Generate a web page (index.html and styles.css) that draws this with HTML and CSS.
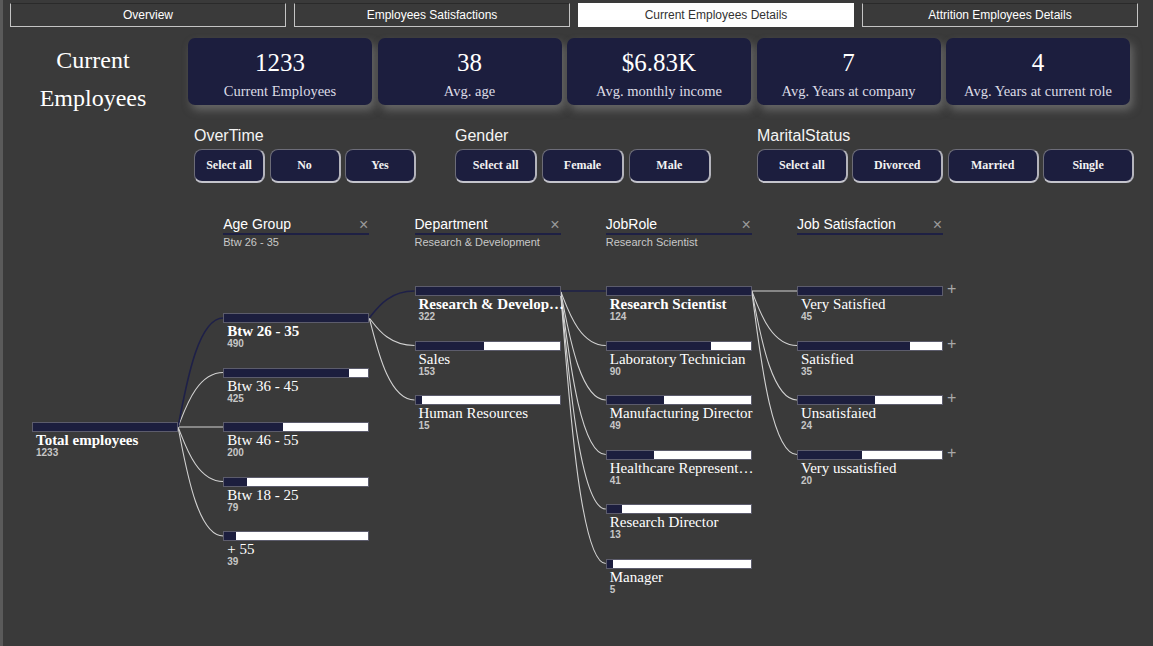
FILE: index.html
```html
<!DOCTYPE html>
<html>
<head>
<meta charset="utf-8">
<link rel="stylesheet" href="styles.css">
</head>
<body>
<div class="tabs">
  <div class="tab">Overview</div>
  <div class="tab">Employees Satisfactions</div>
  <div class="tab active">Current Employees Details</div>
  <div class="tab">Attrition Employees Details</div>
</div>

<div class="top">
  <div class="page-title">Current<br>Employees</div>
  <div class="kpis">
    <div class="kpi"><div class="kpi-value">1233</div><div class="kpi-label">Current Employees</div></div>
    <div class="kpi"><div class="kpi-value">38</div><div class="kpi-label">Avg. age</div></div>
    <div class="kpi"><div class="kpi-value">$6.83K</div><div class="kpi-label">Avg. monthly income</div></div>
    <div class="kpi"><div class="kpi-value">7</div><div class="kpi-label">Avg. Years at company</div></div>
    <div class="kpi"><div class="kpi-value">4</div><div class="kpi-label">Avg. Years at current role</div></div>
  </div>
</div>

<div class="slicers">
  <div class="slicer slicer-ot">
    <div class="slicer-title">OverTime</div>
    <div class="btns"><div class="btn">Select all</div><div class="btn">No</div><div class="btn">Yes</div></div>
  </div>
  <div class="slicer slicer-g">
    <div class="slicer-title">Gender</div>
    <div class="btns"><div class="btn">Select all</div><div class="btn">Female</div><div class="btn">Male</div></div>
  </div>
  <div class="slicer slicer-m">
    <div class="slicer-title">MaritalStatus</div>
    <div class="btns"><div class="btn">Select all</div><div class="btn">Divorced</div><div class="btn">Married</div><div class="btn">Single</div></div>
  </div>
</div>

<div class="tree-head">
  <div></div>
  <div class="th"><div class="th-title"><span>Age Group</span><span class="th-x">×</span></div><div class="th-sub">Btw 26 - 35</div></div>
  <div class="th"><div class="th-title"><span>Department</span><span class="th-x">×</span></div><div class="th-sub">Research &amp; Development</div></div>
  <div class="th"><div class="th-title"><span>JobRole</span><span class="th-x">×</span></div><div class="th-sub">Research Scientist</div></div>
  <div class="th"><div class="th-title"><span>Job Satisfaction</span><span class="th-x">×</span></div><div class="th-sub"></div></div>
</div>

<div class="tree-body">
  <svg class="links" width="1153" height="360" viewBox="0 0 1153 360">
    <g class="lk">
      <path d="M178 141 C184.8 124.65 196.1 86.5 223.25 86.5"/>
      <path d="M178 141 L223.25 141"/>
      <path d="M178 141 C184.8 157.35 196.1 195.5 223.25 195.5"/>
      <path d="M178 141 C184.8 173.7 196.1 250 223.25 250"/>
      <path d="M369.25 32 C376.05 40.25 387.35 59.5 414.5 59.5"/>
      <path d="M369.25 32 C376.05 56.6 387.35 114 414.5 114"/>
      <path d="M560.5 5 C567.3 21.35 578.6 59.5 605.75 59.5"/>
      <path d="M560.5 5 C567.3 37.7 578.6 114 605.75 114"/>
      <path d="M560.5 5 C567.3 54.05 578.6 168.5 605.75 168.5"/>
      <path d="M560.5 5 C567.3 70.4 578.6 223 605.75 223"/>
      <path d="M560.5 5 C567.3 86.75 578.6 277.5 605.75 277.5"/>
      <path d="M751.75 5 L797 5"/>
      <path d="M751.75 5 C758.55 21.35 769.85 59.5 797 59.5"/>
      <path d="M751.75 5 C758.55 37.7 769.85 114 797 114"/>
      <path d="M751.75 5 C758.55 54.05 769.85 168.5 797 168.5"/>
    </g>
    <g class="lk-sel">
      <path d="M178 141 C184.8 108.3 196.1 32 223.25 32"/>
      <path d="M369.25 32 C376.05 23.9 387.35 5 414.5 5"/>
      <path d="M560.5 5 L605.75 5"/>
    </g>
  </svg>

  <div class="col col-total">
    <div class="node sel"><div class="bar"><div class="fill" style="width:100%"></div></div><div class="lbl">Total employees</div><div class="val">1233</div></div>
  </div>

  <div class="col col-age">
    <div class="node sel"><div class="bar"><div class="fill" style="width:100%"></div></div><div class="lbl">Btw 26 - 35</div><div class="val">490</div></div>
    <div class="node"><div class="bar"><div class="fill" style="width:86.7%"></div></div><div class="lbl">Btw 36 - 45</div><div class="val">425</div></div>
    <div class="node"><div class="bar"><div class="fill" style="width:40.8%"></div></div><div class="lbl">Btw 46 - 55</div><div class="val">200</div></div>
    <div class="node"><div class="bar"><div class="fill" style="width:16.1%"></div></div><div class="lbl">Btw 18 - 25</div><div class="val">79</div></div>
    <div class="node"><div class="bar"><div class="fill" style="width:8%"></div></div><div class="lbl">+ 55</div><div class="val">39</div></div>
  </div>

  <div class="col">
    <div class="node sel"><div class="bar"><div class="fill" style="width:100%"></div></div><div class="lbl">Research &amp; Development</div><div class="val">322</div></div>
    <div class="node"><div class="bar"><div class="fill" style="width:47.5%"></div></div><div class="lbl">Sales</div><div class="val">153</div></div>
    <div class="node"><div class="bar"><div class="fill" style="width:4.7%"></div></div><div class="lbl">Human Resources</div><div class="val">15</div></div>
  </div>

  <div class="col">
    <div class="node sel"><div class="bar"><div class="fill" style="width:100%"></div></div><div class="lbl">Research Scientist</div><div class="val">124</div></div>
    <div class="node"><div class="bar"><div class="fill" style="width:72.6%"></div></div><div class="lbl">Laboratory Technician</div><div class="val">90</div></div>
    <div class="node"><div class="bar"><div class="fill" style="width:39.5%"></div></div><div class="lbl">Manufacturing Director</div><div class="val">49</div></div>
    <div class="node"><div class="bar"><div class="fill" style="width:33.1%"></div></div><div class="lbl">Healthcare Representative</div><div class="val">41</div></div>
    <div class="node"><div class="bar"><div class="fill" style="width:10.5%"></div></div><div class="lbl">Research Director</div><div class="val">13</div></div>
    <div class="node"><div class="bar"><div class="fill" style="width:4%"></div></div><div class="lbl">Manager</div><div class="val">5</div></div>
  </div>

  <div class="col">
    <div class="node"><div class="bar"><div class="fill" style="width:100%"></div></div><span class="plus">+</span><div class="lbl">Very Satisfied</div><div class="val">45</div></div>
    <div class="node"><div class="bar"><div class="fill" style="width:77.8%"></div></div><span class="plus">+</span><div class="lbl">Satisfied</div><div class="val">35</div></div>
    <div class="node"><div class="bar"><div class="fill" style="width:53.3%"></div></div><span class="plus">+</span><div class="lbl">Unsatisfaied</div><div class="val">24</div></div>
    <div class="node"><div class="bar"><div class="fill" style="width:44.4%"></div></div><span class="plus">+</span><div class="lbl">Very ussatisfied</div><div class="val">20</div></div>
  </div>
</div>
</body>
</html>
```

FILE: styles.css
```css
html, body {
  margin: 0;
  height: 646px;
}
body {
  width: 1153px;
  background: #3a3a3a;
  box-shadow: inset 3px 0 0 #5a5a5a;
  overflow: hidden;
  box-sizing: border-box;
  padding-top: 3px;
  color: #fff;
  font-family: "Liberation Sans", Arial, sans-serif;
}

/* tabs */
.tabs {
  display: flex;
  gap: 8px;
  padding-left: 10px;
}
.tab {
  width: 276px;
  height: 24px;
  box-sizing: border-box;
  border: 1px solid #c4c4c4;
  border-top-color: #2a2a2a;
  font-size: 12px;
  line-height: 22px;
  text-align: center;
  color: #fff;
}
.tab.active {
  background: #fff;
  color: #333;
  border-color: #fff;
}

/* header / kpis */
.top {
  display: flex;
  align-items: flex-start;
  height: 67px;
  margin-top: 11px;
}
.page-title {
  width: 180px;
  margin-left: 3px;
  margin-top: 3px;
  font-family: "Liberation Serif", "Times New Roman", serif;
  font-size: 24px;
  line-height: 38px;
  text-align: center;
}
.kpis {
  display: grid;
  grid-template-columns: repeat(5, 184px);
  column-gap: 5.5px;
  margin-left: 5px;
}
.kpi {
  height: 67px;
  box-sizing: border-box;
  padding-top: 10px;
  background: #1c1e3e;
  border-radius: 7px;
  box-shadow: 3px 5px 9px rgba(140, 140, 140, 0.55);
  text-align: center;
  font-family: "Liberation Serif", "Times New Roman", serif;
}
.kpi-value {
  font-size: 25px;
  line-height: 30px;
  color: #fff;
}
.kpi-label {
  margin-top: 4px;
  font-size: 14.5px;
  line-height: 18px;
  color: #dcdce6;
}

/* slicers */
.slicers {
  display: flex;
  margin-top: 22px;
  padding-left: 194px;
}
.slicer-ot { width: 222px; margin-right: 39px; }
.slicer-g { width: 256px; margin-right: 46px; }
.slicer-m { width: 377px; }
.slicer-title {
  font-size: 16px;
  line-height: 18px;
  color: #f4f4f4;
}
.btns {
  display: flex;
  gap: 4.5px;
  margin-top: 4px;
}
.btn {
  flex: 1;
  height: 34px;
  box-sizing: border-box;
  display: flex;
  align-items: center;
  justify-content: center;
  background: #1c1e3e;
  border: 1px solid #6c6c78;
  border-right: 2px solid #b4b4bc;
  border-bottom: 2px solid #c4c4cc;
  border-radius: 8px;
  font-family: "Liberation Serif", "Times New Roman", serif;
  font-weight: bold;
  font-size: 12px;
  color: #f2f2f2;
}

/* decomposition tree */
.tree-head,
.tree-body {
  display: grid;
  grid-template-columns: repeat(5, 146px);
  column-gap: 45.25px;
  padding-left: 32px;
}
.tree-head {
  margin-top: 33px;
}
.th-title {
  display: flex;
  justify-content: space-between;
  align-items: center;
  height: 17px;
  border-bottom: 2px solid #1e2044;
  font-size: 14px;
  line-height: 17px;
  color: #fff;
}
.th-x {
  font-size: 16px;
  color: #9a9a9a;
  padding-right: 1px;
}
.th-sub {
  margin-top: 1px;
  height: 13px;
  font-size: 11px;
  line-height: 13px;
  color: #c8c8c8;
}

.tree-body {
  position: relative;
  margin-top: 37px;
  align-items: start;
}
.links {
  position: absolute;
  left: 0;
  top: 0;
  overflow: visible;
  pointer-events: none;
}
.lk path {
  fill: none;
  stroke: #d2d2d2;
  stroke-width: 1.1;
}
.lk-sel path {
  fill: none;
  stroke: #1e2048;
  stroke-width: 1.6;
}
.col-total { padding-top: 136px; }
.col-age { padding-top: 27px; }

.node {
  position: relative;
  height: 54.5px;
}
.bar {
  position: relative;
  z-index: 1;
  height: 10px;
  box-sizing: border-box;
  background: #fff;
  border: 1px solid #5c5c6c;
}
.fill {
  height: 100%;
  background: #1c1e3e;
}
.lbl {
  width: 146px;
  padding-left: 4px;
  box-sizing: content-box;
  white-space: nowrap;
  overflow: hidden;
  text-overflow: ellipsis;
  font-family: "Liberation Serif", "Times New Roman", serif;
  font-size: 15px;
  line-height: 16px;
  color: #fff;
}
.node.sel .lbl {
  font-weight: bold;
}
.val {
  padding-left: 4px;
  margin-top: -1px;
  font-size: 10px;
  line-height: 11px;
  font-weight: bold;
  color: #c6c6c6;
}
.plus {
  position: absolute;
  left: 150px;
  top: -6px;
  font-size: 16px;
  line-height: 18px;
  color: #a8a8a8;
}
```
